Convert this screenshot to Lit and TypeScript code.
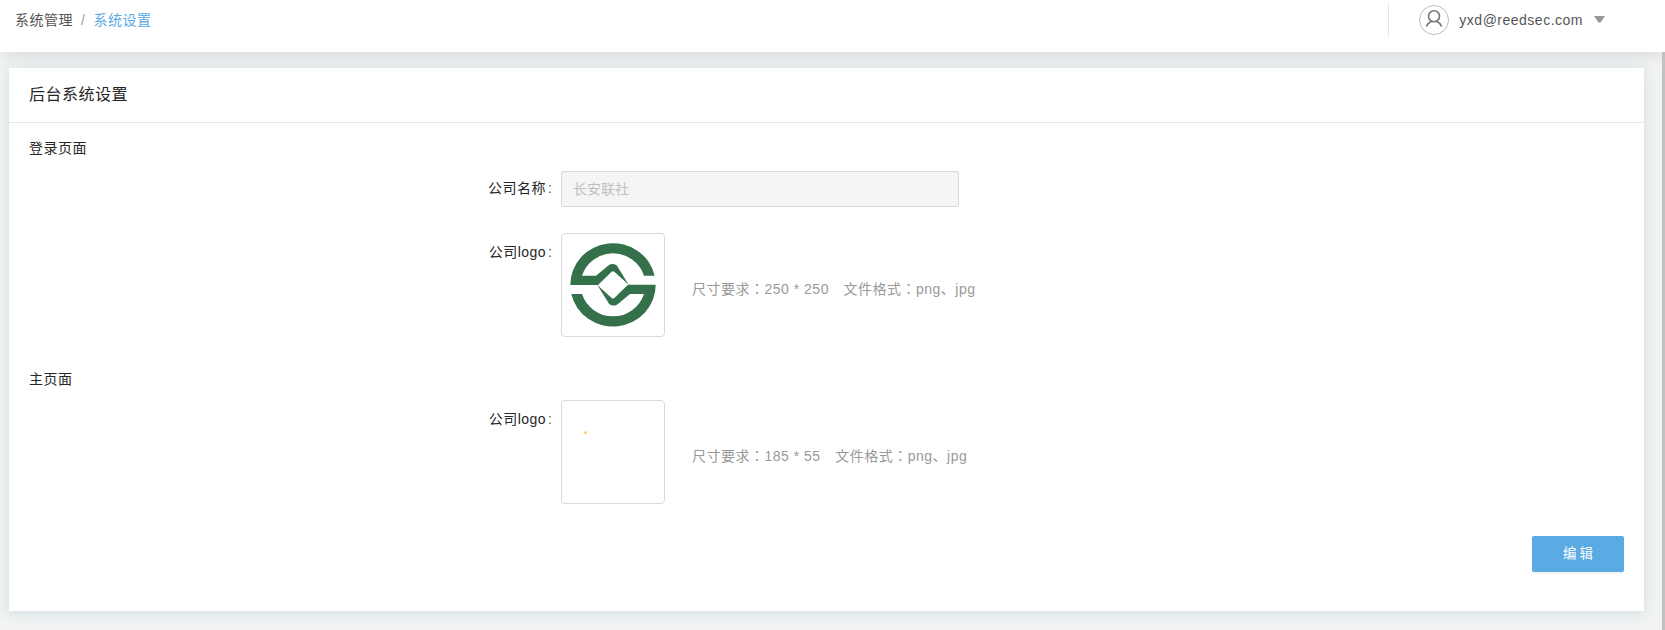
import { LitElement, html, css } from "lit";
import { customElement, property } from "lit/decorators.js";

@customElement("form-row")
class FormRow extends LitElement {
  @property() label = "";
  static styles = css`
    :host { display: flex; padding-left: 462px; }
    .label { width: 90px; text-align: right; height: 34px; line-height: 34px; white-space: nowrap; color: #262626; }
    :host(.logo) .label { padding-top: 2px; }
    .colon { margin: 0 9px 0 2px; letter-spacing: 0; color: #555; }
    .content { display: flex; }
  `;
  render() {
    return html`<div class="label">${this.label}<span class="colon">:</span></div>
      <div class="content"><slot></slot></div>`;
  }
}

@customElement("logo-upload")
class LogoUpload extends LitElement {
  @property() size = "";
  static styles = css`
    :host { display: flex; }
    .box { box-sizing: border-box; width: 104px; height: 104px; border: 1px solid #d9d9d9; border-radius: 4px; display: flex; }
    .hint { margin: 44px 0 0 27px; line-height: 22px; color: #999; white-space: pre; }
    .wide { font-family: "Noto Sans CJK TC", sans-serif; }
  `;
  render() {
    return html`<div class="box"><slot></slot></div>
      <div class="hint">尺寸要求<span class="wide">：</span>${this.size}<span>　</span>文件格式<span class="wide">：</span>png、jpg</div>`;
  }
}

const half = "M31 159A128 124 0 0 1 284 131H252A98 98 0 0 0 66 131H108L147 99Q158 93 170 100L206 158L163 119Q159 116 155 119L114 159Z";

@customElement("app-root")
class AppRoot extends LitElement {
  static styles = css`
    :host { display: flex; flex-direction: column; height: 630px; overflow: hidden; background: #f1f3f4;
      font: 14px "Liberation Sans", "Noto Sans CJK SC", sans-serif; letter-spacing: .5px; color: #262626; }
    .header { height: 52px; flex: none; display: flex; justify-content: space-between; background: #fff;
      box-shadow: 0 2px 18px rgba(0,0,0,.12); z-index: 1; color: #555; }
    .crumbs { display: flex; padding-left: 15px; line-height: 40px; }
    .slash { margin: 0 8px; color: #999; letter-spacing: .5px; }
    .current { color: #5aabe3; }
    .user { display: flex; align-items: center; height: 34px; margin: 3px 60px 0 0; border-left: 1px solid #e8e8e8; padding-left: 30px; }
    .avatar { display: block; width: 30px; height: 30px; margin-right: 10px; }
    .arrow { width: 11px; height: 7px; margin: 0 0 2px 11px; }
    .main { flex: 1; display: flex; justify-content: space-between; align-items: stretch; }
    .card { margin: 16px 0 19px 9px; width: 1635px; background: #fff; box-shadow: 0 2px 12px rgba(60,110,120,.17); }
    .scroll { width: 3px; background: #c1c1c1; z-index: 2; }
    .title { height: 55px; box-sizing: border-box; line-height: 54px; font-size: 16px; padding-left: 20px; border-bottom: 1px solid #e8e8e8; }
    .section { padding-left: 20px; line-height: 22px; }
    .first { margin: 14px 0 12px; }
    .second { margin: 31px 0 10px; }
    .input { box-sizing: border-box; width: 398px; height: 36px; line-height: 34px; padding: 0 11px; background: #f5f5f5;
      border: 1px solid #d9d9d9; border-radius: 2px; color: #bfbfbf; letter-spacing: 0; }
    .name { margin-bottom: 26px; }
    .art { display: block; width: 102px; height: 102px; }
    .actions { display: flex; justify-content: flex-end; padding: 32px 20px 0 0; }
    .edit { font: inherit; font-size: 13.5px; width: 92px; height: 36px; border: 0; padding: 0 0 4px 3px; border-radius: 2px; color: #fff;
      background: #5aabe3; letter-spacing: 3px; box-shadow: 0 2px 0 rgba(0,0,0,.045); }
  `;
  render() {
    return html`
      <div class="header">
        <div class="crumbs"><span>系统管理</span><span class="slash">/</span><span class="current">系统设置</span></div>
        <div class="user">
          <svg class="avatar" viewBox="0 0 30 30" fill="none">
            <circle cx="15" cy="15" r="14.5" stroke="#bbb"/>
            <g stroke="#777" stroke-width="1.6"><circle cx="15" cy="11.3" r="5.5"/><path d="M7.3 21.5Q9 17.7 12.4 16.2M17.6 16.2Q21 17.7 22.7 21.5"/></g>
          </svg>
          <span>yxd@reedsec.com</span>
          <svg class="arrow" viewBox="0 0 11 7"><path d="M0 0H11L6.5 6.5H4.5Z" fill="#999"/></svg>
        </div>
      </div>
      <div class="main">
        <div class="card">
          <div class="title">后台系统设置</div>
          <div class="section first">登录页面</div>
          <form-row class="name" label="公司名称"><div class="input">长安联社</div></form-row>
          <form-row class="logo" label="公司logo"><logo-upload size="250 * 250">
            <svg class="art" viewBox="6 6 306 306" fill="#34714a"><path d=${half}/><path d=${half} transform="rotate(180 159 158.5)"/></svg>
          </logo-upload></form-row>
          <div class="section second">主页面</div>
          <form-row class="logo" label="公司logo"><logo-upload size="185 * 55">
            <svg class="art" viewBox="0 0 102 102"><path d="M23.5 29.8L25.2 31.5L23.5 33.2L21.8 31.5Z" fill="#ffc93a"/></svg>
          </logo-upload></form-row>
          <div class="actions"><button class="edit">编辑</button></div>
        </div>
        <div class="scroll"></div>
      </div>`;
  }
}
